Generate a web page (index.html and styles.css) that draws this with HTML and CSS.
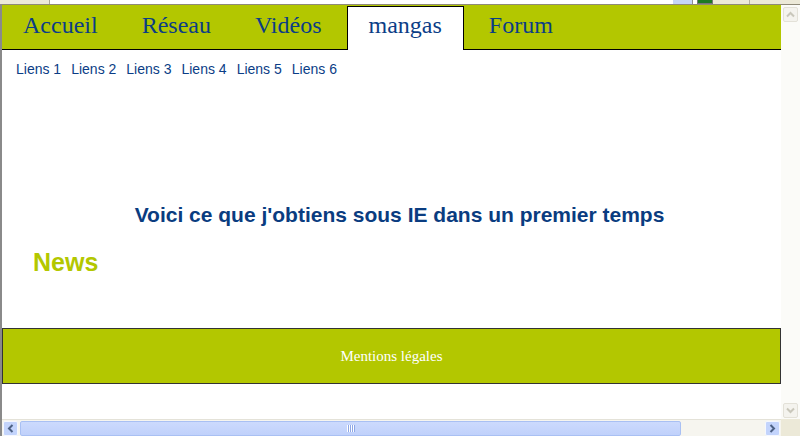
FILE: index.html
```html
<!DOCTYPE html>
<html lang="fr">
<head>
  <meta charset="UTF-8">
  <title>mangas</title>
  <link rel="stylesheet" href="styles.css">
</head>
<body>
  <div class="toolbar">
    <span class="toolbar-grip"></span>
    <span class="toolbar-address"></span>
    <span class="toolbar-go"></span>
    <span class="toolbar-icon"></span>
    <span class="toolbar-rest"></span>
  </div>

  <div class="window">
    <div class="page">
      <ul class="menu">
        <li><a href="#">Accueil</a></li>
        <li><a href="#">Réseau</a></li>
        <li><a href="#">Vidéos</a></li>
        <li class="active"><a href="#">mangas</a></li>
        <li><a href="#">Forum</a></li>
      </ul>

      <div class="sublinks">
        <a href="#">Liens 1</a>
        <a href="#">Liens 2</a>
        <a href="#">Liens 3</a>
        <a href="#">Liens 4</a>
        <a href="#">Liens 5</a>
        <a href="#">Liens 6</a>
      </div>

      <h1 class="title">Voici ce que j'obtiens sous IE dans un premier temps</h1>
      <h2 class="news">News</h2>

      <div class="footer">Mentions légales</div>
    </div>

    <div class="vscroll">
      <span class="vbutton">
        <svg width="13" height="13" viewBox="0 0 13 13"><polyline points="3,8.5 6.5,5 10,8.5" fill="none" stroke="#c9c7bb" stroke-width="2"/></svg>
      </span>
      <span class="vbutton">
        <svg width="13" height="13" viewBox="0 0 13 13"><polyline points="3,4.5 6.5,8 10,4.5" fill="none" stroke="#c9c7bb" stroke-width="2"/></svg>
      </span>
    </div>

    <div class="hscroll">
      <span class="hbutton">
        <svg width="13" height="13" viewBox="0 0 13 13"><polyline points="8.5,3 5,6.5 8.5,10" fill="none" stroke="#4d6185" stroke-width="2"/></svg>
      </span>
      <span class="thumb"><span class="grip"></span></span>
      <span class="hbutton right">
        <svg width="13" height="13" viewBox="0 0 13 13"><polyline points="4.5,3 8,6.5 4.5,10" fill="none" stroke="#4d6185" stroke-width="2"/></svg>
      </span>
    </div>

    <div class="corner"></div>
  </div>
</body>
</html>
```

FILE: styles.css
```css
:root {
  --green: #b3c700;
  --blue: #0b3d86;
}

* {
  box-sizing: border-box;
}

body {
  margin: 0;
  width: 800px;
  height: 436px;
  overflow: hidden;
  background: #fff;
  font-family: "Liberation Sans", Arial, sans-serif;
}

/* browser bits around the page */
.toolbar {
  display: flex;
  height: 4px;
}

.toolbar-grip {
  width: 50px;
  background: #ece9d8;
  border-right: 1px solid #a8a596;
}

.toolbar-address {
  flex: 1;
  background: #fff;
}

.toolbar-go {
  width: 20px;
  background: #c6d5f6;
  border-right: 1px solid #8e8e8e;
}

.toolbar-icon {
  width: 16px;
  margin-left: 4px;
  background: #1d7a24;
  border: 1px solid #777;
  border-top: 0;
}

.toolbar-rest {
  width: 87px;
  background: #ece9d8;
  background-image: linear-gradient(90deg, transparent 36px, #b3af9f 36px, #b3af9f 37px, transparent 37px);
}

.window {
  display: grid;
  grid-template-columns: 779px 19px;
  grid-template-rows: 414px 17px;
  height: 432px;
  border-top: 1px solid #8f8a78;
  border-left: 2px solid #8a8a8a;
}

.page {
  overflow: hidden;
  background: #fff;
}

/* menu */
.menu {
  display: flex;
  gap: 6px;
  height: 45px;
  margin: 0;
  padding: 1px 0 0 2px;
  list-style: none;
  background: var(--green);
  border-bottom: 1px solid #000;
}

.menu li {
  height: 44px;
  padding: 4px 18px 0;
  border: 1px solid transparent;
  border-bottom: 0;
  font-family: "Liberation Serif", Georgia, serif;
  font-size: 24px;
  line-height: 28px;
}

.menu li.active {
  padding: 4px 21px 0;
  background: #fff;
  border-color: #000;
}

.menu a {
  color: var(--blue);
  text-decoration: none;
}

.sublinks {
  display: flex;
  gap: 10px;
  padding: 11px 0 0 14px;
  font-size: 14px;
  line-height: 16px;
}

.sublinks a {
  color: var(--blue);
  text-decoration: none;
}

.title {
  margin: 126px 0 0;
  padding-left: 16px;
  font-size: 21px;
  line-height: 24px;
  text-align: center;
  color: #0a3c80;
}

.news {
  margin: 21px 0 0;
  padding-left: 31px;
  font-size: 25px;
  line-height: 29px;
  color: var(--green);
}

.footer {
  display: flex;
  align-items: center;
  justify-content: center;
  height: 56px;
  margin-top: 51px;
  background: var(--green);
  border: 1px solid #333;
  color: #fff;
  font-family: "Liberation Serif", Georgia, serif;
  font-size: 15px;
  line-height: 17px;
}

/* scrollbars */
.vscroll {
  display: flex;
  flex-direction: column;
  justify-content: space-between;
  padding: 2px 1px 1px 2px;
  background: #fbfbf8;
}

.vbutton {
  display: flex;
  align-items: center;
  justify-content: center;
  width: 15px;
  height: 15px;
  background: #f4f3ee;
  border: 1px solid #e3e1d8;
  border-radius: 2px;
}

.hscroll {
  display: flex;
  align-items: center;
  padding: 0 1px 0 1px;
  background: #f6f5ef;
  border-top: 1px solid #e4e2d8;
}

.hbutton {
  display: flex;
  align-items: center;
  justify-content: center;
  width: 15px;
  height: 15px;
  background: #c3d4fc;
  border: 1px solid #f4f7ff;
  border-radius: 2px;
}

.hbutton.right {
  margin-left: auto;
}

.thumb {
  display: flex;
  align-items: center;
  justify-content: center;
  width: 661px;
  height: 15px;
  margin-left: 2px;
  background: linear-gradient(#ccdafd, #c0d1fb);
  border: 1px solid #a9c0f3;
  border-radius: 2px;
}

.grip {
  width: 8px;
  height: 7px;
  background: repeating-linear-gradient(90deg, #fff 0, #fff 1px, #8ea7e6 1px, #8ea7e6 2px);
}

.corner {
  background: #ece9d8;
}
```
